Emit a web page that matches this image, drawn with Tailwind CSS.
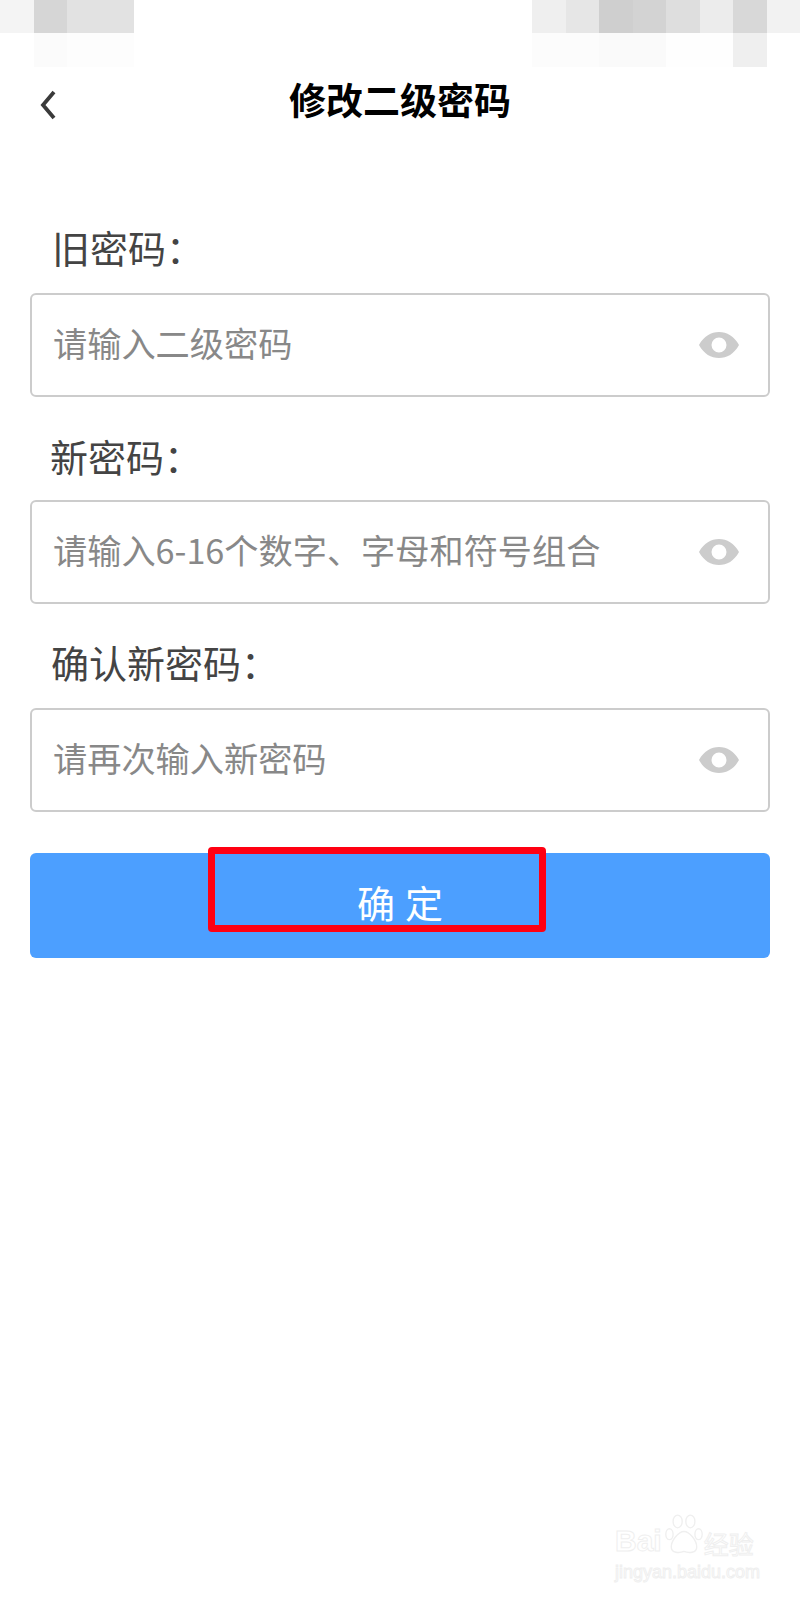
<!DOCTYPE html>
<html lang="zh-CN">
<head>
    <meta charset="UTF-8">
    <meta name="viewport" content="width=device-width, initial-scale=1.0">
    <title>修改二级密码</title>
    <script src="https://cdn.jsdelivr.net/npm/@tailwindcss/browser@4"></script>
</head>
<body class="bg-white font-['Noto_Sans_CJK_SC',sans-serif]">
    <div class="relative w-[800px] h-[1600px] overflow-hidden">
        <!-- blurred status bar -->
        <div class="flex justify-between h-[67px]">
            <div class="grid grid-cols-[repeat(4,33.5px)] grid-rows-[33px_34px]">
                <div class="bg-[#f4f4f4]"></div>
                <div class="bg-[#d6d6d6]"></div>
                <div class="bg-[#e2e2e2]"></div>
                <div class="bg-[#e2e2e2]"></div>
                <div></div>
                <div class="bg-[#fbfbfb]"></div>
                <div class="bg-[#fdfdfd]"></div>
                <div class="bg-[#fdfdfd]"></div>
            </div>
            <div class="grid grid-cols-[repeat(8,33.5px)] grid-rows-[33px_34px]">
                <div class="bg-[#efefef]"></div>
                <div class="bg-[#e6e6e6]"></div>
                <div class="bg-[#cfcfcf]"></div>
                <div class="bg-[#d3d3d3]"></div>
                <div class="bg-[#dedede]"></div>
                <div class="bg-[#ececec]"></div>
                <div class="bg-[#d8d8d8]"></div>
                <div class="bg-[#f2f2f2]"></div>
                <div class="bg-[#fcfcfc]"></div>
                <div class="bg-[#fcfcfc]"></div>
                <div class="bg-[#fafafa]"></div>
                <div class="bg-[#fafafa]"></div>
                <div class="bg-[#fefefe]"></div>
                <div class="bg-[#fefefe]"></div>
                <div class="bg-[#efefef]"></div>
                <div></div>
            </div>
        </div>

        <!-- header -->
        <div class="relative flex items-center justify-center h-[64px]">
            <svg class="absolute left-[38px] top-[22px]" width="20" height="32" viewBox="0 0 20 32" fill="none">
                <path d="M16 3 L5 16 L16 29" stroke="#3a3a3a" stroke-width="3.8"/>
            </svg>
            <h1 class="text-[37px] font-bold text-black leading-none">修改二级密码</h1>
        </div>

        <!-- form -->
        <div class="flex flex-col px-[30px] pt-[91px]">
            <label class="pl-[22px] text-[38px] leading-[50px] text-[#444]">旧密码：</label>
            <div class="flex items-center justify-between h-[104px] mt-[21px] pl-[21px] pr-[28px] border-2 border-[#ccc] rounded-md">
                <span class="mb-[5px] text-[34.2px] text-[#888]">请输入二级密码</span>
                <svg width="42" height="28" viewBox="0 0 42 28"><path fill="#ccc" fill-rule="evenodd" d="M1 14C6 5 13 1 21 1s15 4 20 13c-5 9-12 13-20 13S6 23 1 14zM21 6.500a7.500 7.500 0 1 0 0 15 7.500 7.500 0 0 0 0-15z"/></svg>
            </div>
            <label class="pl-[20px] mt-[34px] text-[38px] leading-[50px] text-[#444]">新密码：</label>
            <div class="flex items-center justify-between h-[104px] mt-[19px] pl-[21px] pr-[28px] border-2 border-[#ccc] rounded-md">
                <span class="mb-[5px] text-[34.2px] text-[#888]">请输入6-16个数字、字母和符号组合</span>
                <svg width="42" height="28" viewBox="0 0 42 28"><path fill="#ccc" fill-rule="evenodd" d="M1 14C6 5 13 1 21 1s15 4 20 13c-5 9-12 13-20 13S6 23 1 14zM21 6.500a7.500 7.500 0 1 0 0 15 7.500 7.500 0 0 0 0-15z"/></svg>
            </div>
            <label class="pl-[21px] mt-[33px] text-[38px] leading-[50px] text-[#444]">确认新密码：</label>
            <div class="flex items-center justify-between h-[104px] mt-[21px] pl-[21px] pr-[28px] border-2 border-[#ccc] rounded-md">
                <span class="mb-[5px] text-[34.2px] text-[#888]">请再次输入新密码</span>
                <svg width="42" height="28" viewBox="0 0 42 28"><path fill="#ccc" fill-rule="evenodd" d="M1 14C6 5 13 1 21 1s15 4 20 13c-5 9-12 13-20 13S6 23 1 14zM21 6.500a7.500 7.500 0 1 0 0 15 7.500 7.500 0 0 0 0-15z"/></svg>
            </div>
            <button class="flex items-center justify-center h-[105px] mt-[41px] pl-[10px] pb-[8px] bg-[#4c9fff] rounded-md text-white text-[38px] tracking-[10px]">确定</button>
        </div>

        <!-- red annotation box -->
        <div class="absolute left-[208px] top-[847px] w-[338px] h-[85px] border-[7px] border-[#ff0012] rounded-sm"></div>

        <!-- watermark -->
        <div class="absolute left-[615px] top-[1513px] w-[145px]">
            <div class="flex items-end h-[45px]">
                <span class="font-['Liberation_Sans',sans-serif] font-bold text-[30px] leading-[34px] text-transparent [-webkit-text-stroke:1px_#efefef]">Bai</span>
                <svg class="ml-[2px]" width="40" height="44" viewBox="0 0 44 44" fill="none" stroke="#efefef" stroke-width="1.5">
                    <ellipse cx="15" cy="6" rx="5" ry="7"/>
                    <ellipse cx="29" cy="6" rx="5" ry="7"/>
                    <ellipse cx="6" cy="20" rx="4" ry="6"/>
                    <ellipse cx="38" cy="20" rx="4" ry="6"/>
                    <path d="M22 17c6 0 14 10 14 17 0 7-9 7-14 5-5 2-14 2-14-5 0-7 8-17 14-17z"/>
                </svg>
                <span class="text-[25px] leading-[30px] text-transparent [-webkit-text-stroke:1px_#efefef]">经验</span>
            </div>
            <div class="font-['Liberation_Sans',sans-serif] text-[18px] leading-[22px] mt-[3px] text-transparent [-webkit-text-stroke:1px_#efefef]">jingyan.baidu.com</div>
        </div>
    </div>
</body>
</html>
